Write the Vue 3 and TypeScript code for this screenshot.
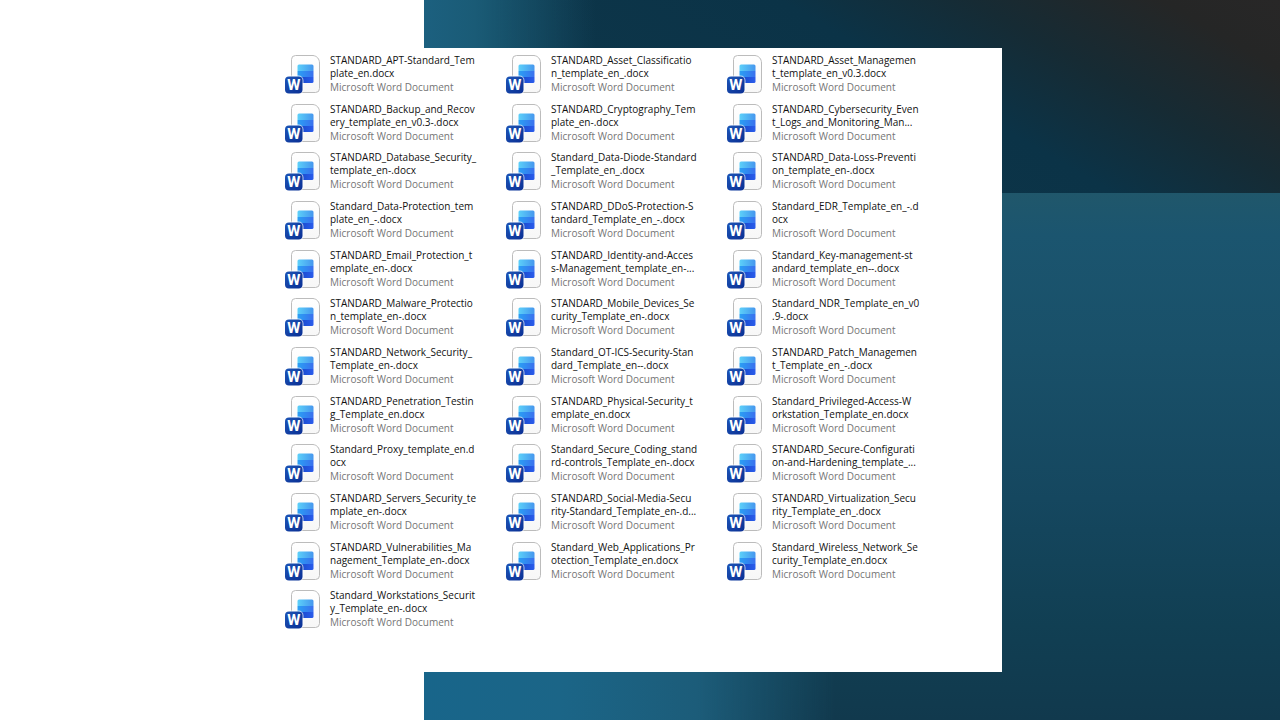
<script setup lang="ts">
interface FileEntry {
  id: number
  lines: [string, string]
}

const names: [string, string][] = [
  ['STANDARD_APT-Standard_Tem', 'plate_en.docx'],
  ['STANDARD_Asset_Classificatio', 'n_template_en_.docx'],
  ['STANDARD_Asset_Managemen', 't_template_en_v0.3.docx'],
  ['STANDARD_Backup_and_Recov', 'ery_template_en_v0.3-.docx'],
  ['STANDARD_Cryptography_Tem', 'plate_en-.docx'],
  ['STANDARD_Cybersecurity_Even', 't_Logs_and_Monitoring_Man...'],
  ['STANDARD_Database_Security_', 'template_en-.docx'],
  ['Standard_Data-Diode-Standard', '_Template_en_.docx'],
  ['STANDARD_Data-Loss-Preventi', 'on_template_en-.docx'],
  ['Standard_Data-Protection_tem', 'plate_en_-.docx'],
  ['STANDARD_DDoS-Protection-S', 'tandard_Template_en_-.docx'],
  ['Standard_EDR_Template_en_-.d', 'ocx'],
  ['STANDARD_Email_Protection_t', 'emplate_en-.docx'],
  ['STANDARD_Identity-and-Acces', 's-Management_template_en-...'],
  ['Standard_Key-management-st', 'andard_template_en--.docx'],
  ['STANDARD_Malware_Protectio', 'n_template_en-.docx'],
  ['STANDARD_Mobile_Devices_Se', 'curity_Template_en-.docx'],
  ['Standard_NDR_Template_en_v0', '.9-.docx'],
  ['STANDARD_Network_Security_', 'Template_en-.docx'],
  ['Standard_OT-ICS-Security-Stan', 'dard_Template_en--.docx'],
  ['STANDARD_Patch_Managemen', 't_Template_en_-.docx'],
  ['STANDARD_Penetration_Testin', 'g_Template_en.docx'],
  ['STANDARD_Physical-Security_t', 'emplate_en.docx'],
  ['Standard_Privileged-Access-W', 'orkstation_Template_en.docx'],
  ['Standard_Proxy_template_en.d', 'ocx'],
  ['Standard_Secure_Coding_stand', 'rd-controls_Template_en-.docx'],
  ['STANDARD_Secure-Configurati', 'on-and-Hardening_template_...'],
  ['STANDARD_Servers_Security_te', 'mplate_en-.docx'],
  ['STANDARD_Social-Media-Secu', 'rity-Standard_Template_en-.d...'],
  ['STANDARD_Virtualization_Secu', 'rity_Template_en_.docx'],
  ['STANDARD_Vulnerabilities_Ma', 'nagement_Template_en-.docx'],
  ['Standard_Web_Applications_Pr', 'otection_Template_en.docx'],
  ['Standard_Wireless_Network_Se', 'curity_Template_en.docx'],
  ['Standard_Workstations_Securit', 'y_Template_en-.docx'],
]

const files: FileEntry[] = names.map((lines, id) => ({ id, lines }))
</script>

<template>
  <div class="stage">
    <div class="backdrop">
      <div class="sky"></div>
      <div class="sea"></div>
    </div>
    <main class="panel">
      <svg class="defs" width="0" height="0" aria-hidden="true">
        <defs>
          <linearGradient id="paper" x1="0" y1="0" x2="0" y2="1">
            <stop offset="0" stop-color="#ffffff" />
            <stop offset="1" stop-color="#f7f7f7" />
          </linearGradient>
          <linearGradient id="tier1" x1="0" y1="0" x2="1" y2="0">
            <stop offset="0" stop-color="#5cd0f9" />
            <stop offset="1" stop-color="#4596ee" />
          </linearGradient>
          <linearGradient id="tier2" x1="0" y1="0" x2="1" y2="0">
            <stop offset="0" stop-color="#2aa0f4" />
            <stop offset="1" stop-color="#3a70ee" />
          </linearGradient>
          <linearGradient id="tier3" x1="0" y1="0" x2="1" y2="0">
            <stop offset="0" stop-color="#1546c4" />
            <stop offset="1" stop-color="#2a5cec" />
          </linearGradient>
          <linearGradient id="badge" x1="0" y1="0" x2="1" y2="1">
            <stop offset="0" stop-color="#1d55b6" />
            <stop offset="1" stop-color="#0a2f94" />
          </linearGradient>
          <symbol id="word-file" viewBox="0 0 36 40">
            <path
              d="M10.500 1.500H28C32 2 34.500 5 34.500 9V34.500Q34.500 38.500 30.500 38.500H10.500Q6.500 38.500 6.500 34.500V5.500Q6.500 1.500 10.500 1.500Z"
              fill="url(#paper)"
              stroke="#bcbcbc"
            />
            <path d="M12.500 17V12Q12.500 10.500 14 10.500H27Q28.500 10.500 28.500 12V17Z" fill="url(#tier1)" />
            <path d="M12.500 17H28.500V23H12.500Z" fill="url(#tier2)" />
            <path d="M12.500 23H28.500V27.500Q28.500 29 27 29H12.500Z" fill="url(#tier3)" />
            <rect x="-1" y="21.500" width="19.500" height="19" rx="5" fill="#ffffff" fill-opacity="0.7" />
            <rect x="0" y="22.500" width="17.500" height="17" rx="4" fill="url(#badge)" />
            <text
              x="8.750"
              y="36"
              text-anchor="middle"
              font-family="Roboto, sans-serif"
              font-size="15"
              font-weight="700"
              fill="#ffffff"
            >W</text>
          </symbol>
        </defs>
      </svg>
      <ul class="files">
        <li v-for="file in files" :key="file.id" class="file">
          <svg class="icon" viewBox="0 0 36 40" aria-hidden="true"><use href="#word-file" /></svg>
          <div class="text">
            <span v-for="line in file.lines" :key="line" class="name">{{ line }}</span>
            <span class="type">Microsoft Word Document</span>
          </div>
        </li>
      </ul>
    </main>
  </div>
</template>

<style>
body {
  margin: 0;
}
</style>

<style scoped>
.stage {
  display: grid;
  grid-template-columns: 331fr 669fr;
  min-height: 100vh;
  background: #ffffff;
}
.backdrop {
  grid-area: 1 / 2;
  display: flex;
  flex-direction: column;
}
.sky {
  flex: 193;
  background:
    linear-gradient(90deg, #1c607f 0%, #1a5b76 6%, rgba(17, 63, 84, 0) 20%),
    linear-gradient(30deg, #0f384c 0%, #0b3347 58%, #162b34 74%, #252626 90%, #282727 100%);
}
.sea {
  flex: 527;
  background:
    linear-gradient(90deg, #18658a 0%, #1b6587 16%, #1c5c79 32%, rgba(22, 76, 98, 0) 48%),
    linear-gradient(180deg, #20576b 0%, #1b556f 8%, #195069 30%, #15475f 58%, #113f53 82%, #11394d 100%);
}
.panel {
  grid-area: 1 / 1 / 2 / 3;
  box-sizing: border-box;
  display: flex;
  width: 724px;
  max-width: 100%;
  margin: 48px auto;
  padding: 6px 0 34px 7px;
  background: #ffffff;
}
.defs {
  position: absolute;
}
.files {
  display: grid;
  grid-template-columns: repeat(3, 221px);
  grid-template-rows: repeat(12, 1fr);
  margin: 0;
  padding: 0;
  list-style: none;
}
.file {
  display: flex;
  align-items: flex-start;
  gap: 9px;
}
.icon {
  flex: none;
  width: 36px;
  height: 40px;
}
.text {
  display: flex;
  flex-direction: column;
  font-family: 'Open Sans', 'Noto Sans', sans-serif;
  font-size: 10px;
  line-height: 13px;
  white-space: nowrap;
}
.name {
  color: #111111;
}
.type {
  line-height: 15px;
  color: #757575;
}
</style>
